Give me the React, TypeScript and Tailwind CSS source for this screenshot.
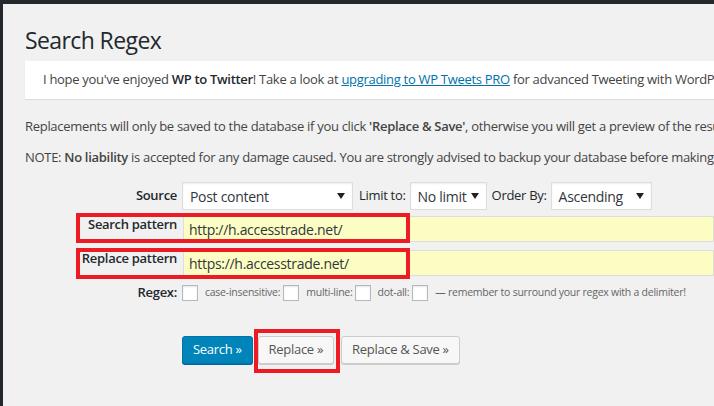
import React from 'react';

// Small dropdown look-alike (native select rendering differs per browser)
const Select = ({ value, className }: { value: string; className: string }) => (
  <div
    className={`flex items-center justify-between h-[28px] bg-white border border-[#ddd] shadow-[inset_0_1px_2px_rgba(0,0,0,0.07)] pl-[7px] pr-[7px] text-[14px] text-[#32373c] shrink-0 ${className}`}
  >
    <span className="whitespace-nowrap">{value}</span>
    <svg width="8" height="6" viewBox="0 0 8 6" className="shrink-0">
      <polygon points="0,0 8,0 4,6" fill="#222" />
    </svg>
  </div>
);

const Checkbox = () => (
  <span className="inline-block w-[16px] h-[16px] bg-white border border-[#b4b9be] shadow-[inset_0_1px_2px_rgba(0,0,0,0.1)] shrink-0" />
);

const App: React.FC = () => {
  return (
    <div className="w-[714px] h-[406px] overflow-hidden bg-[#f1f1f1] flex flex-col font-['Open_Sans','Noto_Sans',sans-serif] tracking-[-0.3px] text-[#444]">
      {/* admin bar */}
      <div className="h-[4px] bg-[#23282d] shrink-0" />

      <div className="flex flex-1 min-h-0">
        {/* admin menu edge */}
        <div className="w-[3px] bg-[#23282d] shrink-0" />

        <div className="flex-1 min-w-0 pl-[22px] flex flex-col">
          <h1 className="mt-[21px] text-[23px] leading-[30px] text-[#23282d] font-normal tracking-[-0.6px]">Search Regex</h1>

          {/* notice */}
          <div className="mt-[6px] h-[38px] bg-white shadow-[0_1px_1px_rgba(0,0,0,0.08)] pl-[18px] flex items-center whitespace-nowrap text-[13px] overflow-hidden">
            <span>
              I hope you've enjoyed <strong className="font-semibold text-[#23282d]">WP to Twitter</strong>! Take a look at{' '}
              <a className="text-[#0073aa] underline">upgrading to WP Tweets PRO</a> for advanced Tweeting with WordPress!
            </span>
          </div>

          <p className="mt-[17px] text-[13px] leading-[20px] whitespace-nowrap">
            Replacements will only be saved to the database if you click <strong className="font-semibold">'Replace &amp; Save'</strong>, otherwise you will get a preview of the results.
          </p>
          <p className="mt-[11px] text-[13px] leading-[20px] whitespace-nowrap">
            NOTE: <strong className="font-semibold">No liability</strong> is accepted for any damage caused. You are strongly advised to backup your database before making any changes.
          </p>

          {/* form */}
          <div className="mt-[15px] flex flex-col text-[13px] text-[#23282d]">
            {/* source row */}
            <div className="flex items-center h-[28px]">
              <div className="w-[153px] shrink-0 text-right font-semibold pr-[1px]">Source</div>
              <div className="ml-[4px] flex items-center">
                <Select value="Post content" className="w-[171px]" />
                <span className="ml-[6px] mr-[4px] whitespace-nowrap">Limit to:</span>
                <Select value="No limit" className="w-[77px]" />
                <span className="ml-[5px] mr-[4px] whitespace-nowrap">Order By:</span>
                <Select value="Ascending" className="w-[101px]" />
              </div>
            </div>

            {/* search pattern */}
            <div className="relative mt-[6px] flex items-start h-[26px]">
              <div className="w-[153px] shrink-0 text-right font-semibold leading-[16px] pr-[1px]">Search pattern</div>
              <div className="ml-[5px] flex-1 h-[26px] bg-[#fbfdc3] border border-[#ddd] pl-[5px] flex items-center text-[14px] text-[#32373c]">
                http://h.accesstrade.net/
              </div>
              <div className="absolute left-[51px] top-[-3px] w-[334px] h-[30px] border-[4px] border-[#ed1c24]" />
            </div>

            {/* replace pattern */}
            <div className="relative mt-[8px] flex items-start h-[26px]">
              <div className="w-[153px] shrink-0 text-right font-semibold leading-[16px] pr-[1px]">Replace pattern</div>
              <div className="ml-[5px] flex-1 h-[26px] bg-[#fbfdc3] border border-[#ddd] pl-[5px] flex items-center text-[14px] text-[#32373c]">
                https://h.accesstrade.net/
              </div>
              <div className="absolute left-[51px] top-[-2px] w-[334px] h-[31px] border-[4px] border-[#ed1c24]" />
            </div>

            {/* regex options */}
            <div className="mt-[9px] flex items-center h-[16px]">
              <div className="w-[153px] shrink-0 text-right font-semibold pr-[1px]">Regex:</div>
              <div className="ml-[4px] flex items-center text-[10.5px] text-[#666] whitespace-nowrap tracking-[-0.25px]">
                <Checkbox />
                <span className="ml-[7px] mr-[3px]">case-insensitive:</span>
                <Checkbox />
                <span className="ml-[7px] mr-[2px]">multi-line:</span>
                <Checkbox />
                <span className="ml-[7px] mr-[3px]">dot-all:</span>
                <Checkbox />
                <span className="ml-[7px]">— remember to surround your regex with a delimiter!</span>
              </div>
            </div>

            {/* buttons */}
            <div className="mt-[35px] flex items-center pl-[157px] gap-[5px]">
              <button className="h-[28px] px-[10px] rounded-[3px] bg-[#0085ba] border border-[#0073aa] shadow-[0_1px_0_#006799] text-white text-[13px] whitespace-nowrap">
                Search »
              </button>
              <div className="relative">
                <button className="h-[28px] px-[10px] rounded-[3px] bg-[#f7f7f7] border border-[#ccc] shadow-[0_1px_0_#ccc] text-[#555] text-[13px] whitespace-nowrap">
                  Replace »
                </button>
                <div className="absolute left-[-4px] top-[-7px] w-[86px] h-[44px] border-[4px] border-[#ed1c24]" />
              </div>
              <button className="ml-[2px] h-[28px] px-[10px] rounded-[3px] bg-[#f7f7f7] border border-[#ccc] shadow-[0_1px_0_#ccc] text-[#555] text-[13px] whitespace-nowrap">
                Replace &amp; Save »
              </button>
            </div>
          </div>
        </div>
      </div>
    </div>
  );
};

export default App;
